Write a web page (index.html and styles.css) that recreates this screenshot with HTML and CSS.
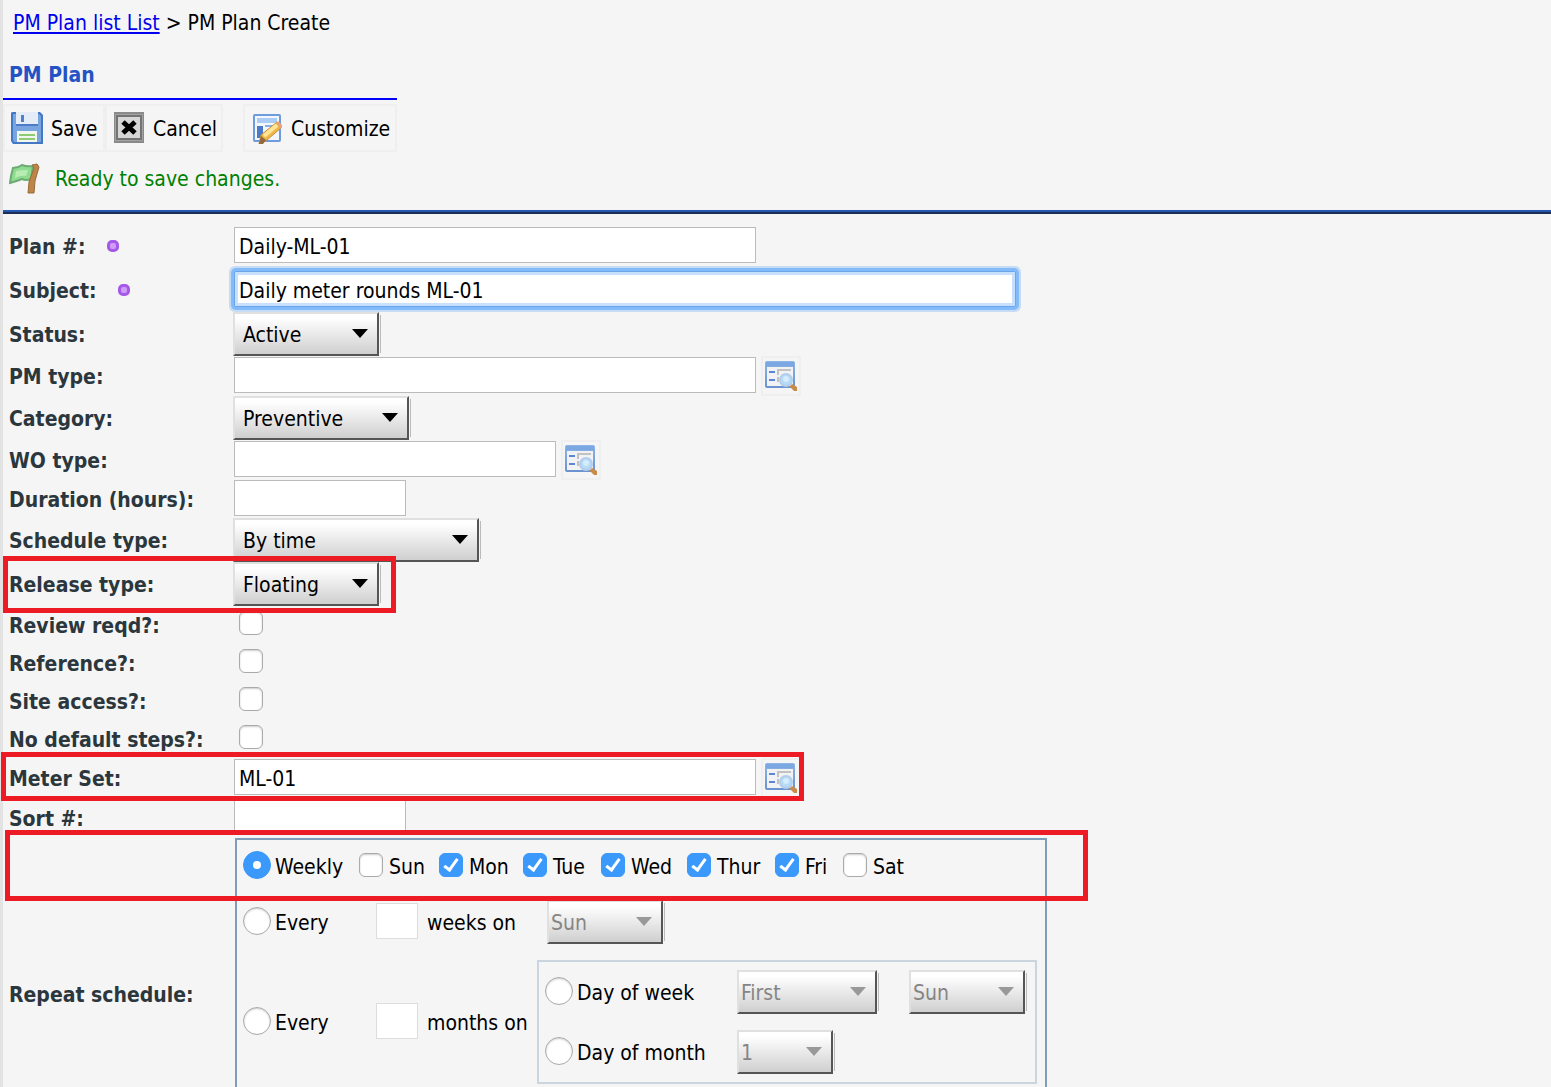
FILE: index.html
```html
<!DOCTYPE html>
<html lang="en">
<head>
    <meta charset="UTF-8">
    <meta name="viewport" content="width=device-width, initial-scale=1.0">
    <title>PM Plan Create</title>
    <link rel="stylesheet" href="styles.css">
</head>
<body>
    <svg class="defs" width="0" height="0" aria-hidden="true">
        <defs>
            <linearGradient id="blueFrame" x1="0" y1="0" x2="0" y2="1">
                <stop offset="0" stop-color="#8fb4e6"/>
                <stop offset="1" stop-color="#6a92cf"/>
            </linearGradient>
            <symbol id="lookup" viewBox="0 0 32 32">
                <rect x="0" y="1" width="30" height="27" rx="2" fill="url(#blueFrame)"/>
                <rect x="1" y="2" width="28" height="4" fill="#7ba7e2"/>
                <rect x="2" y="7" width="26" height="19" fill="#f1f2f4"/>
                <rect x="4" y="11" width="6" height="2" fill="#5b86dc"/>
                <rect x="4" y="19" width="6" height="2" fill="#5b86dc"/>
                <path d="M13 15V10H26M13 22V17" fill="none" stroke="#c2c2c2" stroke-width="2"/>
                <path d="M25 26l2-2 5 3v4h-3l-4-4z" fill="#c98b4a"/>
                <circle cx="21" cy="20" r="6" fill="#b5dbf7" stroke="#b4cdec" stroke-width="2"/>
                <circle cx="21" cy="19" r="3" fill="#d4ecfc"/>
            </symbol>
        </defs>
    </svg>

    <header>
        <nav class="breadcrumb"><a href="#">PM Plan list List</a> &gt; PM Plan Create</nav>
        <div class="toolbar-box">
            <h1>PM Plan</h1>
            <div class="toolbar">
                <button type="submit" form="planForm" class="save">
                    <svg width="32" height="32" viewBox="0 0 32 32">
                        <path d="M1 0H29L32 3V32H2L0 29V1z" fill="#4477c4"/>
                        <path d="M2 2H28L30 4V30H3L2 28z" fill="#78a4e0"/>
                        <path d="M5 0H27V12H5z" fill="#e3ecf7"/>
                        <path d="M10 3H13V10H10z" fill="#4f80c8"/>
                        <path d="M5 12H27V14H5z" fill="#4c7cc6"/>
                        <path d="M6 19H26V30H6z" fill="#f1f7ee"/>
                        <path d="M8 22H24V24H8zM8 26H24V28H8z" fill="#8fcb72"/>
                    </svg>
                    Save
                </button>
                <button type="button" class="cancel">
                    <svg width="32" height="32" viewBox="0 0 32 32">
                        <rect x="1" y="0" width="30" height="31" fill="#8a8a8a"/>
                        <rect x="2" y="2" width="28" height="27" fill="#a2a2a2"/>
                        <rect x="3" y="3" width="26" height="25" fill="#747474"/>
                        <rect x="5" y="5" width="22" height="21" fill="#d6d6d6"/>
                        <path d="M10 10L22 21M22 10L10 21" stroke="#000" stroke-width="5"/>
                    </svg>
                    Cancel
                </button>
                <button type="button" class="customize">
                    <svg width="32" height="32" viewBox="0 0 32 32">
                        <rect x="2" y="2" width="28" height="28" rx="2" fill="#6d9bdb"/>
                        <rect x="4" y="4" width="24" height="24" fill="#f3f7fc"/>
                        <rect x="6" y="6" width="20" height="5" fill="#a9cdf5"/>
                        <rect x="6" y="14" width="6" height="12" fill="#4a7bc8"/>
                        <rect x="14" y="13" width="13" height="2" fill="#8db2e4"/>
                        <path d="M8 32L10 23L26 10L31 15L16 28z" fill="#efb94a" stroke="#c58a3a" stroke-width="1"/>
                        <path d="M13 24L26 13" stroke="#ffe596" stroke-width="4"/>
                        <path d="M25 11L27 9L31 13V16L29 17z" fill="#e9a37a"/>
                        <path d="M8 32L10 24L15 28L12 32z" fill="#96683c"/>
                    </svg>
                    Customize
                </button>
            </div>
        </div>
        <p class="message">
            <svg width="32" height="32" viewBox="0 0 32 32">
                <path d="M4 5Q9 5 13 2Q18 4 24 3L22 16Q17 18 13 16Q8 18 1 20L2 13z" fill="#8fdc90" stroke="#6cab74" stroke-width="2"/>
                <path d="M7 8Q12 7 19 7L17 13Q11 12 6 15z" fill="#b8edb2"/>
                <path d="M23 2L28 1L30 4L26 18L25 30H19L20 19L25 5z" fill="#bd8648" stroke="#996a3a" stroke-width="1"/>
            </svg>
            Ready to save changes.
        </p>
    </header>

    <form id="planForm">
        <div class="row tall">
            <label for="planNo">Plan #: <i class="required"></i></label>
            <input type="text" id="planNo" class="long" value="Daily-ML-01">
        </div>
        <div class="row tall">
            <label for="subject">Subject: <i class="required"></i></label>
            <input type="text" id="subject" class="full active" value="Daily meter rounds ML-01">
        </div>
        <div class="row tall">
            <label for="status">Status:</label>
            <span class="drop w-146"><select id="status"><option>Active</option></select></span>
        </div>
        <div class="row medium">
            <label for="pmType">PM type:</label>
            <input type="text" id="pmType" class="long">
            <button type="button" class="lookup" aria-label="Find PM type"><svg width="32" height="32"><use href="#lookup"/></svg></button>
        </div>
        <div class="row tall">
            <label for="category">Category:</label>
            <span class="drop w-176"><select id="category"><option>Preventive</option></select></span>
        </div>
        <div class="row medium">
            <label for="woType">WO type:</label>
            <input type="text" id="woType" class="mid">
            <button type="button" class="lookup" aria-label="Find WO type"><svg width="32" height="32"><use href="#lookup"/></svg></button>
        </div>
        <div class="row">
            <label for="duration">Duration (hours):</label>
            <input type="text" id="duration" class="short">
        </div>
        <div class="row tall">
            <label for="scheduleType">Schedule type:</label>
            <span class="drop w-246"><select id="scheduleType"><option>By time</option></select></span>
        </div>
        <div class="row tall">
            <label for="releaseType">Release type:</label>
            <span class="drop w-146"><select id="releaseType"><option>Floating</option></select></span>
            <span class="mark mark-release"></span>
        </div>
        <div class="row">
            <label for="review">Review reqd?:</label>
            <input type="checkbox" id="review">
        </div>
        <div class="row">
            <label for="reference">Reference?:</label>
            <input type="checkbox" id="reference">
        </div>
        <div class="row">
            <label for="siteAccess">Site access?:</label>
            <input type="checkbox" id="siteAccess">
        </div>
        <div class="row">
            <label for="noSteps">No default steps?:</label>
            <input type="checkbox" id="noSteps">
        </div>
        <div class="row medium">
            <label for="meterSet">Meter Set:</label>
            <input type="text" id="meterSet" class="long" value="ML-01">
            <button type="button" class="lookup" aria-label="Find meter set"><svg width="32" height="32"><use href="#lookup"/></svg></button>
            <span class="mark mark-meter"></span>
        </div>
        <div class="row medium">
            <label for="sortNo">Sort #:</label>
            <input type="text" id="sortNo" class="short">
        </div>
        <div class="row repeat" role="group" aria-labelledby="repeatLabel">
            <span class="row-label" id="repeatLabel">Repeat schedule:</span>
            <div class="schedule">
                <div class="weekly">
                    <label><input type="radio" name="repeat" checked>Weekly</label>
                    <label><input type="checkbox">Sun</label>
                    <label><input type="checkbox" checked>Mon</label>
                    <label><input type="checkbox" checked>Tue</label>
                    <label><input type="checkbox" checked>Wed</label>
                    <label><input type="checkbox" checked>Thur</label>
                    <label><input type="checkbox" checked>Fri</label>
                    <label><input type="checkbox">Sat</label>
                </div>
                <div class="every">
                    <label><input type="radio" name="repeat">Every</label>
                    <input type="text" id="weeks" class="count">
                    <label for="weeks">weeks on</label>
                    <span class="drop w-116"><select disabled aria-label="Day"><option>Sun</option></select></span>
                </div>
                <div class="every months">
                    <label><input type="radio" name="repeat">Every</label>
                    <input type="text" id="months" class="count">
                    <label for="months">months on</label>
                    <div class="month-days">
                        <label><input type="radio" name="monthDay">Day of week</label>
                        <span class="drop w-140"><select disabled aria-label="Week of month"><option>First</option></select></span>
                        <span class="drop w-116"><select disabled aria-label="Day of week"><option>Sun</option></select></span>
                        <label><input type="radio" name="monthDay">Day of month</label>
                        <span class="drop w-96"><select disabled aria-label="Day of month"><option>1</option></select></span>
                    </div>
                </div>
            </div>
            <span class="mark mark-weekly"></span>
        </div>
    </form>
</body>
</html>
```

FILE: styles.css
```css
* {
    box-sizing: border-box;
}
body {
    font-family: "DejaVu Sans Condensed", Tahoma, "DejaVu Sans", sans-serif;
    font-size: 21px;
    line-height: 28px;
    margin: 0;
    padding-left: 3px;
    height: 100vh;
    overflow: hidden;
    color: #000;
    background: linear-gradient(90deg, #e3e3e3 3px, #f5f5f5 3px);
}
input, select, button {
    font: inherit;
    color: inherit;
    margin: 0;
}
.defs {
    position: absolute;
}

/* header */
header {
    border-bottom: 2px solid #1b2f52;
    box-shadow: inset 0 -2px #2556b0;
    height: 214px;
}
.breadcrumb {
    padding: 9px 10px 0;
}
.breadcrumb a {
    color: #0000ee;
}
.toolbar-box {
    width: 394px;
    margin-top: 24px;
}
h1 {
    margin: 0;
    padding: 0 6px 9px;
    font-size: 21px;
    line-height: 28px;
    color: #2353c4;
    border-bottom: 2px solid #0000ff;
}
.toolbar {
    display: flex;
    margin-top: 4px;
}
.toolbar button {
    display: flex;
    align-items: center;
    gap: 8px;
    height: 48px;
    padding: 1px 6px 0;
    border: 2px solid #efefef;
    background: none;
    white-space: nowrap;
}
.toolbar svg {
    flex: none;
    margin-bottom: 2px;
}
.toolbar .save {
    width: 102px;
}
.toolbar .cancel {
    width: 118px;
}
.toolbar .customize {
    width: 154px;
    margin-left: auto;
}
.message {
    display: flex;
    align-items: center;
    gap: 14px;
    margin: 11px 0 0 6px;
    color: #008000;
}

/* form rows */
.row {
    position: relative;
    display: flex;
    align-items: center;
    height: 38px;
}
.row.medium {
    height: 40px;
}
.row.tall {
    height: 44px;
}
form {
    padding-top: 10px;
}
.row > label, .row-label {
    width: 231px;
    flex: none;
    padding: 2px 0 0 6px;
    font-weight: bold;
    color: #2b373d;
}
.required {
    display: inline-block;
    width: 12px;
    height: 12px;
    margin-left: 15px;
    border: 3px solid #a658e8;
    border-radius: 5px;
    background-color: #cf9cf6;
    vertical-align: 2px;
}
input[type="text"] {
    height: 36px;
    padding: 3px 4px 0;
    border: 1px solid #bbb;
    background-color: #fff;
    outline: none;
}
.row input[type="text"] {
    margin-bottom: 2px;
}
.row .full {
    width: 782px;
}
.row .long {
    width: 522px;
}
.row .mid {
    width: 322px;
}
.row .short {
    width: 172px;
}
input.active {
    border-color: #6ba6ea;
    border-radius: 2px;
    box-shadow: inset 0 0 0 3px #c6e0fe, 0 0 0 3px #83bbfa, 0 0 0 5px #c6dcf5;
}
.lookup {
    display: flex;
    width: 40px;
    height: 40px;
    margin-left: 5px;
    padding: 2px;
    border: 2px solid #efefef;
    background: none;
}

/* drop-downs */
.drop {
    position: relative;
    height: 44px;
    flex: none;
}
.row > .drop {
    margin-left: -1px;
}
.drop::after {
    content: "";
    position: absolute;
    top: 17px;
    right: 11px;
    border: 8px solid transparent;
    border-top: 9px solid #000;
    border-bottom: 0;
    pointer-events: none;
}
.drop:has(select:disabled)::after {
    border-top-color: #999;
}
.drop select {
    appearance: none;
    width: 100%;
    height: 44px;
    padding: 2px 8px 0;
    border: 2px solid;
    border-color: #e0e0e0 #555 #555 #e0e0e0;
    border-radius: 0;
    background: linear-gradient(#fff 10%, #cfcfcf);
    box-shadow: 1px 0 #f5f5f5, 5px 0 0 -3px #bbb;
}
.drop select:disabled {
    padding: 2px 2px 0;
    color: #858585;
    opacity: 1;
}
.w-96 { width: 96px; }
.w-116 { width: 116px; }
.w-140 { width: 140px; }
.w-146 { width: 146px; }
.w-176 { width: 176px; }
.w-246 { width: 246px; }

/* tick boxes and radios */
input[type="checkbox"], input[type="radio"] {
    appearance: none;
    position: relative;
    flex: none;
    width: 24px;
    height: 24px;
    margin-bottom: 4px;
    border: 1px solid #aaa;
    border-radius: 6px;
    background-color: #fff;
    box-shadow: inset 0 1px 2px #ccc;
}
.row > input[type="checkbox"] {
    margin-left: 5px;
}
input[type="radio"] {
    width: 28px;
    height: 28px;
    border-radius: 50%;
}
input[type="checkbox"]:checked, input[type="radio"]:checked {
    border-color: #3b99fc;
    background-color: #3b99fc;
    box-shadow: none;
}
input[type="checkbox"]:checked::after {
    content: "";
    position: absolute;
    left: 7px;
    top: 2px;
    width: 5px;
    height: 12px;
    border: solid #fff;
    border-width: 0 3px 3px 0;
    transform: rotate(36deg);
}
input[type="radio"]:checked::after {
    content: "";
    position: absolute;
    left: 9px;
    top: 9px;
    width: 8px;
    height: 8px;
    border-radius: 50%;
    background-color: #fff;
}

/* repeat schedule */
.row.repeat {
    height: auto;
}
.schedule {
    display: flex;
    flex-direction: column;
    width: 812px;
    height: 312px;
    margin-left: 1px;
    padding-left: 6px;
    border: 2px solid #7f9db9;
}
.schedule label {
    display: flex;
    align-items: center;
    gap: 6px;
    padding-top: 2px;
    white-space: nowrap;
}
.schedule label:has([type="radio"]) {
    gap: 4px;
}
.weekly {
    display: grid;
    grid-template-columns: 116px 80px 84px 78px 86px 88px 68px auto;
    height: 52px;
    margin-bottom: 8px;
}
.every {
    display: grid;
    grid-template-columns: 133px 51px 120px auto;
    align-items: center;
    height: 44px;
    margin-bottom: 16px;
}
.every.months {
    grid-template-columns: 133px 51px 110px 500px;
    height: auto;
}
.every .count {
    width: 42px;
    border-color: #ddd;
}
.month-days {
    display: grid;
    grid-template-columns: 192px 172px auto;
    row-gap: 16px;
    padding: 8px 6px;
    border: 2px solid #cbd5e0;
}

/* red markers */
.mark {
    position: absolute;
    border: 5px solid #ed1c24;
    z-index: 1;
    pointer-events: none;
}
.mark-release {
    left: 0;
    top: -6px;
    width: 393px;
    height: 57px;
}
.mark-meter {
    left: -2px;
    top: -6px;
    width: 803px;
    height: 49px;
}
.mark-weekly {
    left: 2px;
    top: -8px;
    width: 1083px;
    height: 71px;
}
```
